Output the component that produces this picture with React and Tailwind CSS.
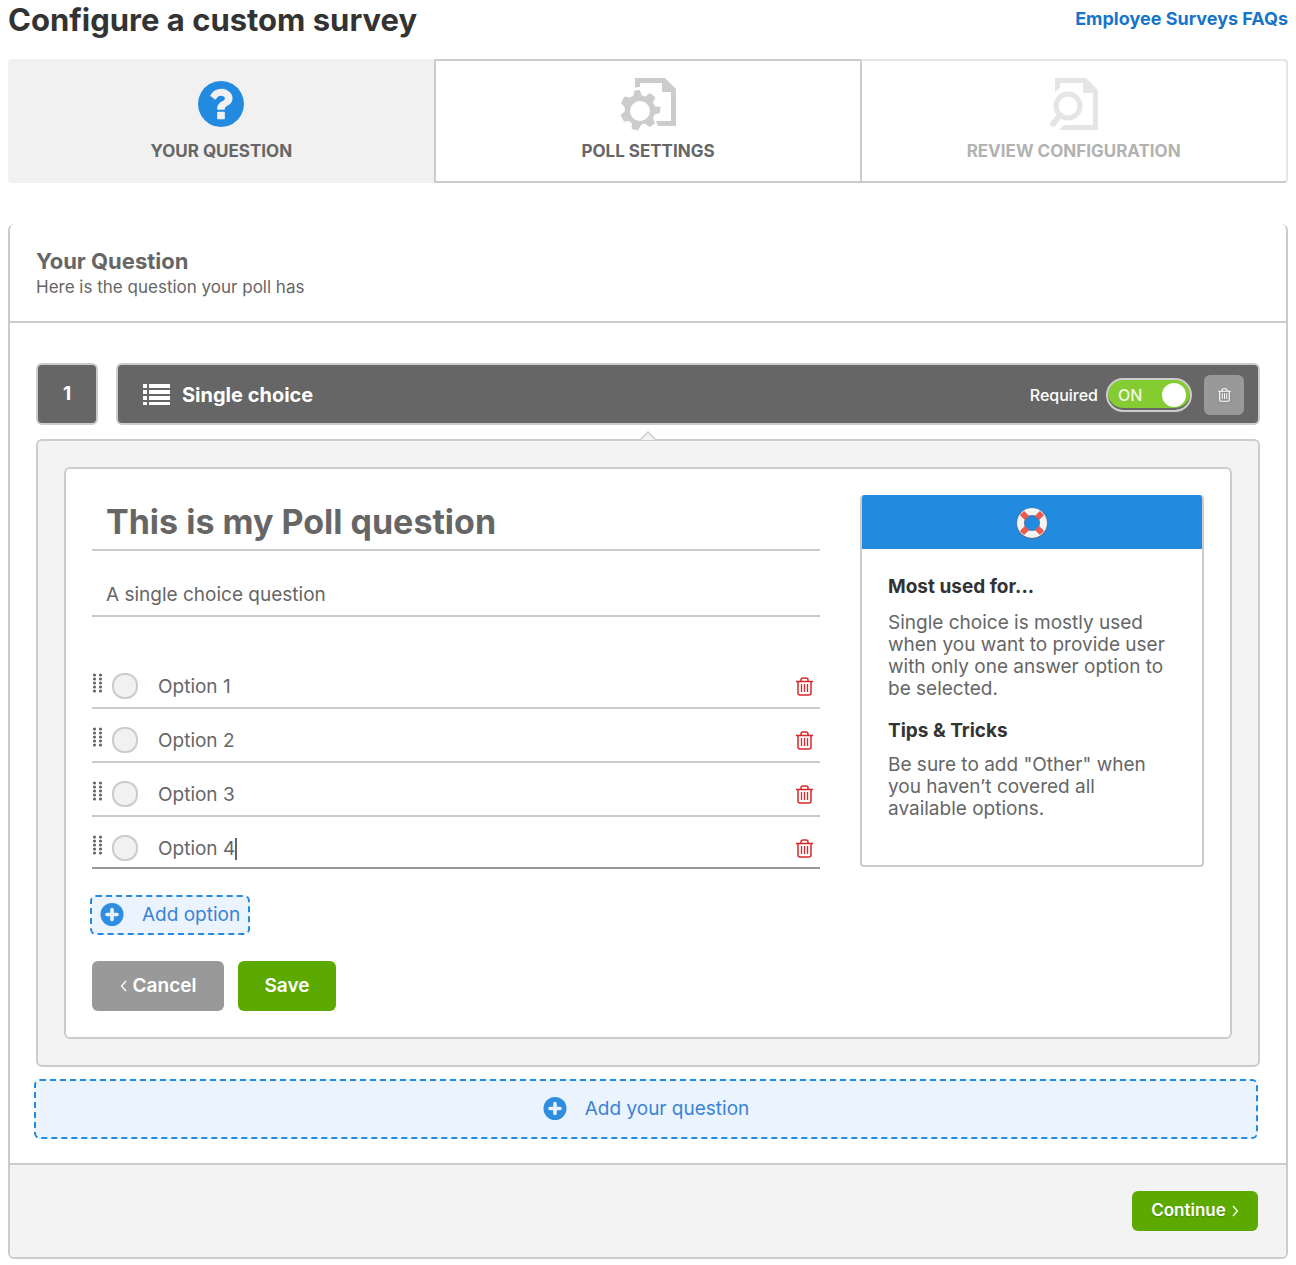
import { useState } from 'react'
import clsx from 'clsx'

const QuestionIcon = () => (
  <svg viewBox="0 0 1536 1536" className="size-[46px] fill-[#228be0]" aria-hidden="true">
    <path d="M896 1248v-192q0-14-9-23t-23-9h-192q-14 0-23 9t-9 23v192q0 14 9 23t23 9h192q14 0 23-9t9-23zM1152 576q0-88-55.500-163t-138.500-116-170-41q-243 0-371 213-15 24 8 42l132 100q7 6 19 6 16 0 25-12 53-68 86-92 34-24 86-24 48 0 85.500 26t37.500 59q0 38-20 61t-68 45q-63 28-115.500 86.500t-52.500 125.500v36q0 14 9 23t23 9h192q14 0 23-9t9-23q0-19 21.500-49.500t54.500-49.500q32-18 49-28.500t46-35 44.500-48 28-60.500 12.500-81zM1536 768q0 209-103 385.500t-279.500 279.500-385.500 103-385.500-103-279.500-279.500-103-385.500 103-385.500 279.500-279.500 385.500-103 385.500 103 279.500 279.500 103 385.500z" />
  </svg>
)

const SettingsIcon = () => (
  <svg viewBox="0 0 56 54" className="h-[54px] w-14 fill-[#ccc]" aria-hidden="true">
    <path d="M15 1h30l11 11v37H38l-2-5h15V15h-9V6H20v4l-5 .5z" />
    <path
      fillRule="evenodd"
      d="M14.500 13.500L20 13l1.500 5.200 4 1.300 4.500-3.500 5.500 4.500-2.500 5 2.200 4 5.300.5-.5 6-5.500 1.500-1.500 3.500 2 5.500-5.500 3.500-4.500-3.500-3.500 1L18 53.500l-6.500-1.500.5-5.500-3-2.500-5 .5L.5 38l4.300-3.500v-4L1 26l3.500-6.500 5.500 1 3.500-2zM20 24a10 10 0 1 0 0 20 10 10 0 0 0 0-20z"
    />
  </svg>
)

const ReviewIcon = () => (
  <svg viewBox="0 0 50 54" className="h-[54px] w-[50px]" aria-hidden="true">
    <path d="M6 1h31l12 12v40H10l5-5h29V16H34V6H11v5l-5 4z" fill="#e5e5e5" />
    <circle cx="19" cy="29" r="12" fill="none" stroke="#e5e5e5" strokeWidth="5" />
    <path d="M11 38L4 47" stroke="#e5e5e5" strokeWidth="6" strokeLinecap="round" />
  </svg>
)

const ListIcon = () => (
  <svg viewBox="0 0 27 22" className="h-[22px] w-[27px] fill-white" aria-hidden="true">
    <path d="M0 0h4v4H0zM6 0h21v4H6zM0 6h4v4H0zM6 6h21v4H6zM0 12h4v4H0zM6 12h21v4H6zM0 18h4v3H0zM6 18h21v3H6z" />
  </svg>
)

const TrashIcon = ({ className }) => (
  <svg viewBox="0 0 17 19" fill="none" stroke="currentColor" className={className} aria-hidden="true">
    <path d="M0 4.500h17M5 4V3q0-2 2-2h3q2 0 2 2v1" strokeWidth="1.500" />
    <path d="M2 4.500v11.500q0 2 2 2h9q2 0 2-2V4.500" strokeWidth="1.500" />
    <path d="M5.500 7v8M8.500 7v8M11.500 7v8" strokeWidth="1.300" />
  </svg>
)

const PlusIcon = () => (
  <svg viewBox="0 0 24 24" className="size-6" aria-hidden="true">
    <circle cx="12" cy="11.500" r="11.500" fill="#2f8ddf" />
    <path d="M12 6.500v10M7 11.500h10" stroke="#ebf3ff" strokeWidth="3.600" strokeLinecap="round" />
  </svg>
)

const Chevron = ({ d }) => (
  <svg viewBox="0 0 7 12" fill="none" stroke="currentColor" className="h-3 w-[7px]" aria-hidden="true">
    <path d={d} strokeWidth="1.300" />
  </svg>
)

const GripIcon = () => (
  <svg viewBox="0 0 11 20" className="h-5 w-[11px] fill-[#666]" aria-hidden="true">
    {[2, 6, 10, 14, 18].map((y) => (
      <g key={y}>
        <circle cx="2.500" cy={y} r="1.600" />
        <circle cx="8.500" cy={y} r="1.600" />
      </g>
    ))}
  </svg>
)

const LifeRing = () => (
  <svg viewBox="0 0 32 32" fill="none" className="mt-0.5 size-8" aria-hidden="true">
    <circle cx="16" cy="16.500" r="11.500" stroke="#52719a" strokeWidth="8.500" />
    <circle cx="16" cy="16" r="11.500" stroke="#f6f4f2" strokeWidth="7" />
    <path d="M6 6l5 5M26 6l-5 5M6 26l5-5M26 26l-5-5" stroke="#ea5a4f" strokeWidth="6" />
  </svg>
)

const steps = [
  { label: 'Your question', icon: QuestionIcon, box: 'rounded-l-sm bg-[#f1f1f1] text-[#666]' },
  { label: 'Poll settings', icon: SettingsIcon, box: '-mx-px border-2 border-[#ccc] text-[#666]' },
  {
    label: 'Review configuration',
    icon: ReviewIcon,
    box: 'rounded-r-sm border-y-2 border-r-2 border-[#e5e5e5] border-b-[#ccc] text-[#b2b2b2]'
  }
]

const options = ['Option 1', 'Option 2', 'Option 3', 'Option 4']

const dashed = 'flex items-center rounded-md border-2 border-dashed border-[#228be0] bg-[#ebf3ff] text-[19px] text-[#3a83d6]'

const OptionRow = ({ name, active }) => (
  <li
    className={clsx(
      'flex items-start border-b-2 pt-[18px]',
      active ? 'h-[52px] border-[#999]' : 'h-[54px] border-[#ccc]'
    )}
  >
    <GripIcon />
    <input
      type="radio"
      name="choice"
      aria-label={`Select ${name}`}
      className="ml-[9px] size-[26px] appearance-none rounded-xl border-2 border-[#ccc] bg-[#f1f1f1]"
    />
    <div className="ml-5 flex h-7 flex-1 items-center">
      <input
        type="text"
        defaultValue={name}
        aria-label={name}
        className={clsx('text-[19px] outline-none', active ? 'field-sizing-content' : 'flex-1')}
      />
      {active && <span className="h-[22px] w-0.5 bg-[#666]" />}
    </div>
    <button type="button" aria-label={`Delete ${name}`} className="mt-1 mr-[7px] text-[#d9272a]">
      <TrashIcon className="h-[19px] w-[17px]" />
    </button>
  </li>
)

const Help = () => (
  <aside className="w-[344px] shrink-0 self-start overflow-hidden rounded-sm border-x-2 border-b-2 border-[#ccc]">
    <div className="flex h-[54px] items-center justify-center bg-[#228be0]">
      <LifeRing />
    </div>
    <div className="px-[26px] pt-[27px] pb-[45px] text-[19px] leading-[22px]">
      <h3 className="font-bold text-[#333]">Most used for...</h3>
      <p className="mt-[14px]">
        Single choice is mostly used when you want to provide user with only one answer option to be selected.
      </p>
      <h3 className="mt-5 font-bold text-[#333]">Tips &amp; Tricks</h3>
      <p className="mt-3">Be sure to add "Other" when you haven’t covered all available options.</p>
    </div>
  </aside>
)

const App = () => {
  const [required, setRequired] = useState(true)

  return (
    <div className="bg-white px-2 pb-1.5 font-['Inter',sans-serif] text-[#666]">
      {/* Page header */}
      <header className="flex h-[59px] items-start justify-between">
        <h1 className="text-[31px] leading-10 font-bold text-[#333]">Configure a custom survey</h1>
        <a href="#faqs" className="text-lg leading-[38px] font-bold text-[#1874c9]">
          Employee Surveys FAQs
        </a>
      </header>

      {/* Steps */}
      <nav className="grid grid-cols-3">
        {steps.map((step) => (
          <button
            key={step.label}
            type="button"
            className={clsx('flex h-[124px] flex-col items-center justify-center gap-1 pt-0.5 text-[17px] font-bold uppercase', step.box)}
          >
            <span className="flex h-[54px] items-center">
              <step.icon />
            </span>
            <span className="leading-8">{step.label}</span>
          </button>
        ))}
      </nav>

      {/* Question card */}
      <main className="mt-[41px] rounded-md border-x-2 border-b-2 border-[#ccc]">
        <div className="border-b-2 border-[#ccc] px-[26px] pt-[23px] pb-[22px]">
          <h2 className="text-[22px] leading-7 font-bold">Your Question</h2>
          <p className="text-[17px] leading-6">Here is the question your poll has</p>
        </div>

        <div className="px-[26px] pt-10 pb-6">
          <div className="flex gap-[18px]">
            <div className="flex size-[62px] items-center justify-center rounded-md border-2 border-[#ccc] bg-[#666] text-[19px] font-bold text-white">
              1
            </div>
            <div className="flex h-[62px] flex-1 items-center rounded-md border-2 border-[#ccc] bg-[#666] pt-0.5 pr-[14px] pl-[25px] text-white">
              <ListIcon />
              <span className="ml-3 flex-1 text-xl font-bold">Single choice</span>
              <label className="flex items-center gap-2">
                <span className="text-base font-medium">Required</span>
                <input
                  type="checkbox"
                  checked={required}
                  onChange={(e) => setRequired(e.target.checked)}
                  className="sr-only"
                />
                <span className="flex h-[34px] w-[86px] items-center justify-between rounded-full border-2 border-[#ccc] bg-[#85cc33] pr-1 pl-2.5 text-base font-medium text-[#eef8e2] shadow-[inset_0_-2px_0_#666]">
                  {required ? 'ON' : 'OFF'}
                  <span className="size-6 rounded-full bg-white" />
                </span>
              </label>
              <button
                type="button"
                aria-label="Delete question"
                className="ml-3 flex size-10 items-center justify-center rounded-md bg-[#999]"
              >
                <TrashIcon className="h-[14px] w-[13px] drop-shadow-sm" />
              </button>
            </div>
          </div>

          <div className="relative mt-[14px] rounded-md border-2 border-[#ccc] bg-[#f3f3f3] p-[26px]">
            <svg viewBox="0 0 16 9" className="absolute -top-[10px] left-1/2 h-[9px] w-4 -translate-x-1/2" aria-hidden="true">
              <path d="M0 9l8-8 8 8" fill="#f3f3f3" stroke="#ccc" strokeWidth="1.500" />
            </svg>
            <div className="flex gap-10 rounded-md border-2 border-[#ccc] bg-white p-[26px]">
              <form className="flex-1">
                <input
                  type="text"
                  aria-label="Question"
                  defaultValue="This is my Poll question"
                  className="block h-14 w-full border-b-2 border-[#ccc] px-[14px] pb-0.5 text-[34px] font-bold outline-none"
                />
                <input
                  type="text"
                  aria-label="Description"
                  defaultValue="A single choice question"
                  className="mt-5 block h-[46px] w-full border-b-2 border-[#ccc] px-[14px] pt-0.5 text-[19px] outline-none"
                />
                <ul className="mt-[38px]">
                  {options.map((name, i) => (
                    <OptionRow key={name} name={name} active={i === options.length - 1} />
                  ))}
                </ul>
                <button type="button" className={clsx(dashed, 'mt-[26px] -ml-0.5 h-10 gap-[18px] px-2')}>
                  <PlusIcon />
                  Add option
                </button>
                <div className="mt-[26px] flex gap-[14px] text-[19px] font-semibold text-white text-shadow-sm">
                  <button type="button" className="flex h-[50px] w-[132px] items-center justify-center gap-1.5 rounded-md bg-[#999]">
                    <Chevron d="M6 1L1.500 6 6 11" />
                    Cancel
                  </button>
                  <button type="button" className="h-[50px] w-[98px] rounded-md bg-[#5caa00]">
                    Save
                  </button>
                </div>
              </form>
              <Help />
            </div>
          </div>

          <div className="mt-3 -ml-0.5 pr-0.5">
            <button type="button" className={clsx(dashed, 'h-[60px] w-full justify-center gap-[18px]')}>
              <PlusIcon />
              Add your question
            </button>
          </div>
        </div>

        <footer className="flex justify-end rounded-b-sm border-t-2 border-[#ccc] bg-[#f3f3f3] py-[26px] pr-7">
          <button
            type="button"
            className="flex h-10 w-[126px] items-center justify-center gap-1.5 rounded-md bg-[#5caa00] text-[17px] font-semibold text-white text-shadow-sm"
          >
            Continue
            <Chevron d="M1 1l4.500 5L1 11" />
          </button>
        </footer>
      </main>
    </div>
  )
}

export default App
